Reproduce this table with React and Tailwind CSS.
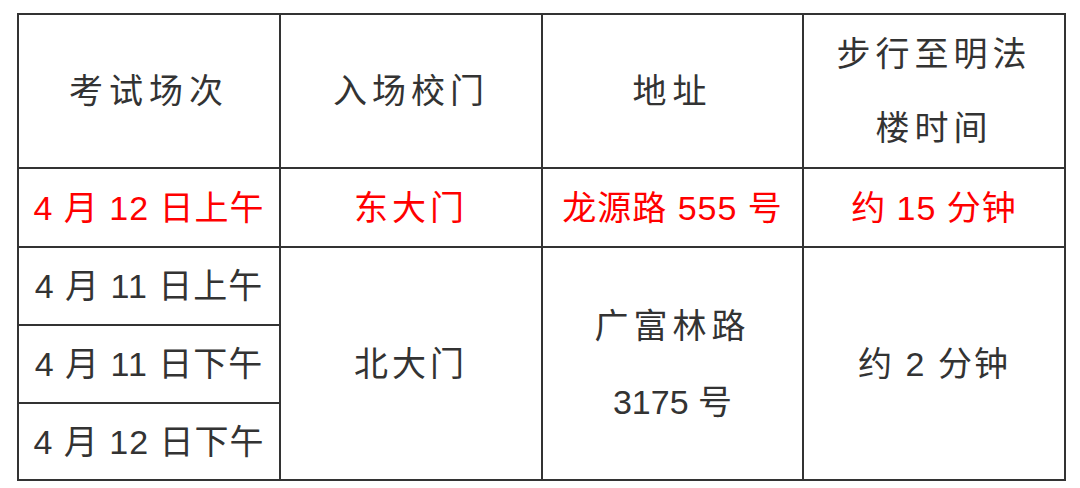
export default function App() {
  const font = { fontFamily: '"Liberation Sans", "Noto Sans CJK SC", sans-serif' };
  const cell = "border-2 border-[#333333] text-center align-middle p-0";
  return (
    <div className="w-[1080px] h-[488px] bg-white pl-[17px] pt-[13px]" style={font}>
      <table className="border-collapse table-fixed w-[1047px] h-[467px]">
        <colgroup>
          <col className="w-[262px]" />
          <col className="w-[262px]" />
          <col className="w-[261px]" />
          <col className="w-[262px]" />
        </colgroup>
        <tbody>
          <tr className="h-[154px] text-[#333333] text-[34px] tracking-[5px]">
            <td className={`${cell} tracking-[6px]`}>考试场次</td>
            <td className={cell}>入场校门</td>
            <td className={`${cell} tracking-[6px]`}>地址</td>
            <td className={`${cell} leading-[74px]`}>步行至明法<br />楼时间</td>
          </tr>
          <tr className="h-[79px] text-[#ff0000] text-[34px] leading-[40px] tracking-[1px]">
            <td className={cell}>4 月 12 日上午</td>
            <td className={`${cell} tracking-[4px]`}>东大门</td>
            <td className={cell}>龙源路 555 号</td>
            <td className={cell}>约 15 分钟</td>
          </tr>
          <tr className="h-[78px] text-[#333333] text-[34px] leading-[40px] tracking-[1px]">
            <td className={cell}>4 月 11 日上午</td>
            <td className={`${cell} tracking-[4px]`} rowSpan={3}>北大门</td>
            <td className={`${cell} leading-[76px]`} rowSpan={3}>
              <span className="tracking-[5px]">广富林路</span>
              <br />
              <span className="tracking-[0px]">3175 号</span>
            </td>
            <td className={`${cell} tracking-[2px]`} rowSpan={3}>约 2 分钟</td>
          </tr>
          <tr className="h-[78px] text-[#333333] text-[34px] leading-[40px] tracking-[1px]">
            <td className={cell}>4 月 11 日下午</td>
          </tr>
          <tr className="h-[77px] text-[#333333] text-[34px] leading-[40px] tracking-[1px]">
            <td className={cell}>4 月 12 日下午</td>
          </tr>
        </tbody>
      </table>
    </div>
  );
}
